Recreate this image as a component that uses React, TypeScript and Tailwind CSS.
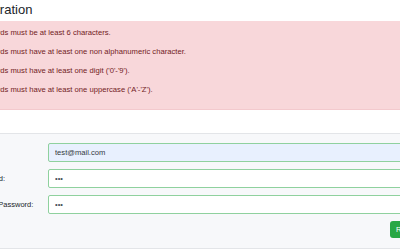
import React from 'react';

const errors = [
  'Passwords must be at least 6 characters.',
  'Passwords must have at least one non alphanumeric character.',
  "Passwords must have at least one digit ('0'-'9').",
  "Passwords must have at least one uppercase ('A'-'Z').",
];

export default function App() {
  return (
    <div className="w-[400px] h-[250px] overflow-hidden bg-white font-['Liberation_Sans',Arial,sans-serif]">
      <div className="-ml-[36px] w-[480px]">
        {/* Page title */}
        <h2 className="h-[21px] pt-[2px] -ml-[1px] text-[13px] leading-[15px] text-[#212529]">Registration</h2>

        {/* Validation summary */}
        <div className="h-[89px] bg-[#f8d7da] border-b border-[#f3c9cd] pl-[7px] pt-[7px] text-[#721c24] text-[7.65px]">
          <ul className="flex flex-col gap-[9px]">
            {errors.map((e) => (
              <li key={e} className="leading-[10px]">
                {e}
              </li>
            ))}
          </ul>
        </div>

        {/* Form */}
        <form className="mt-[23px] h-[116px] border-y border-[#e3e5e8] bg-[#f7f8fa] pl-[6px] pr-[12px] pt-[9px] text-[7.5px]">
          <div className="flex flex-col gap-[7px]">
            <div className="flex items-center">
              <label className="w-[78px] text-[#212529]">Email:</label>
              <input
                readOnly
                value="test@mail.com"
                className="flex-1 h-[19px] rounded-[2px] border border-[#8fd19e] bg-[#e8f0fe] px-[6px] text-[7.6px] text-[#343a40] outline-none"
              />
            </div>
            <div className="flex items-center">
              <label className="w-[78px] text-[#212529]">Password:</label>
              <input
                readOnly
                type="password"
                value="abc"
                className="flex-1 h-[19px] rounded-[2px] border border-[#8fd19e] bg-white px-[6px] text-[7.5px] text-[#495057] outline-none"
              />
            </div>
            <div className="flex items-center">
              <label className="w-[78px] text-[#212529]">Confirm Password:</label>
              <input
                readOnly
                type="password"
                value="abc"
                className="flex-1 h-[19px] rounded-[2px] border border-[#8fd19e] bg-white px-[6px] text-[7.5px] text-[#495057] outline-none"
              />
            </div>
          </div>
          <div className="mt-[7px] flex justify-end pr-[2px]">
            <button
              type="button"
              className="h-[17px] rounded-[3px] bg-[#28a745] px-[6px] text-[7.5px] text-white"
            >
              Register
            </button>
          </div>
        </form>
      </div>
    </div>
  );
}
